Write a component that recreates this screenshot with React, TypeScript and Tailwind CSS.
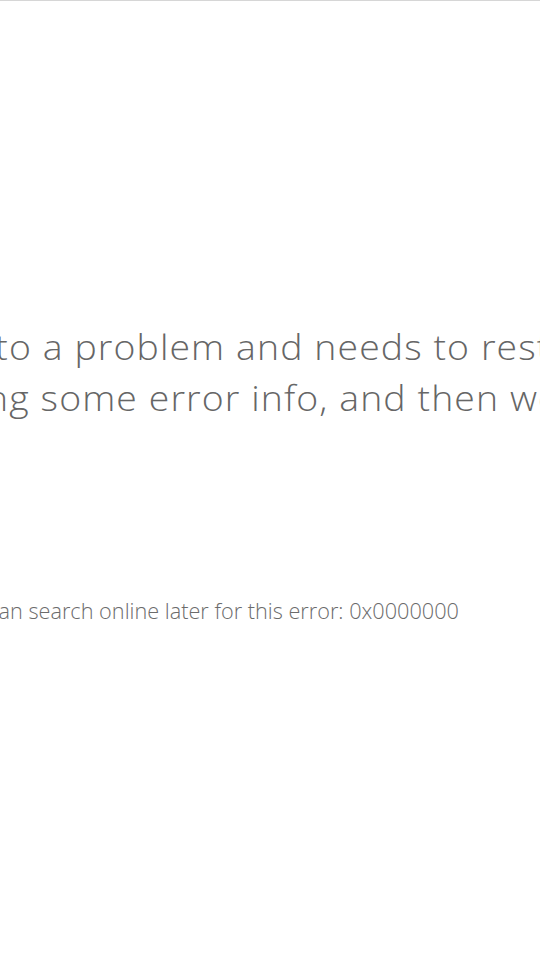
import React from "react";

function App() {
  return (
    <main className="w-[540px] h-[960px] overflow-hidden bg-white border-t border-[#d6d6d6] font-['Open_Sans',sans-serif] font-light">
      <div className="pt-[321px] whitespace-nowrap">
        <div className="origin-left scale-x-[1.1] text-[34px] leading-[51px] tracking-[1px] text-[#666666]">
          <p className="ml-[-236px]">Your PC ran into a problem and needs to restart. We're just</p>
          <p className="ml-[-126px]">collecting some error info, and then we'll restart for you.</p>
        </div>
        <p className="ml-[-312px] mt-[172px] text-[21.7px] leading-[30px] text-[#6b6b6b]">
          If you'd like to know more, you can search online later for this error: 0x0000000
        </p>
      </div>
    </main>
  );
}

export default App;
